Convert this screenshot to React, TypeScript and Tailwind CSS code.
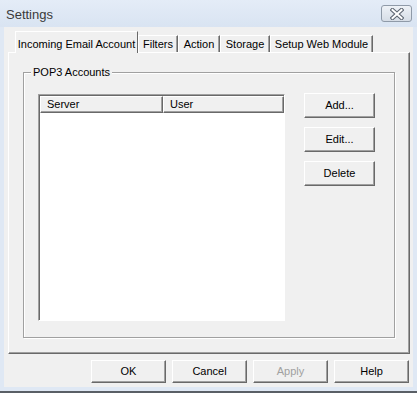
const raised =
  "border border-t-white border-l-white border-r-[#696969] border-b-[#696969] shadow-[inset_-1px_-1px_0_#a0a0a0]";

function Btn({ label, className = "", disabled = false }: { label: string; className?: string; disabled?: boolean }) {
  return (
    <div
      className={`flex items-center justify-center bg-[#f0f0f0] ${raised} ${disabled ? "text-[#a0a0a0]" : "text-black"} ${className}`}
    >
      {label}
    </div>
  );
}

function CloseGlyph() {
  // outlined white X, like the Win7 basic caption button
  return (
    <svg width="14" height="12" viewBox="0 0 14 12">
      <path d="M2.5 2 L11.5 10 M11.5 2 L2.5 10" stroke="#5d6672" strokeWidth="4.2" strokeLinecap="square" />
      <path d="M2.5 2 L11.5 10 M11.5 2 L2.5 10" stroke="#ffffff" strokeWidth="2" strokeLinecap="square" />
    </svg>
  );
}

const tabs = [
  { label: "Filters", w: "w-[40px]" },
  { label: "Action", w: "w-[42px]" },
  { label: "Storage", w: "w-[50px]" },
  { label: "Setup Web Module", w: "w-[103px]" },
];

export default function App() {
  return (
    <div className="w-[417px] h-[393px] flex flex-col bg-[#dfe8f4] border-b-2 border-b-[#5a5f66] font-['Liberation_Sans',Arial,sans-serif] text-[11px] text-black select-none whitespace-nowrap">
      {/* Title bar */}
      <div className="h-[27px] flex items-start bg-gradient-to-b from-[#e4ecf7] to-[#d9e4f2]">
        <span className="pl-[6px] pt-[5px] text-[13px] text-[#3a3a3a]">Settings</span>
        <div className="ml-auto mt-[5px] mr-[5px] w-[31px] h-[17px] rounded-[3px] border border-[#8f9aa8] bg-gradient-to-b from-[#eef2f7] to-[#d6dde6] flex items-center justify-center">
          <CloseGlyph />
        </div>
      </div>

      {/* Client area */}
      <div className="flex-1 mx-[4px] mb-[4px] bg-[#f0f0f0] flex flex-col">
        {/* Tabs */}
        <div className="mt-[4px] ml-[11px] h-[21px] flex items-end relative z-10">
          <div className="w-[123px] h-[22px] -mb-[1px] bg-[#f0f0f0] border-l border-t border-l-white border-t-white border-r border-r-[#696969] flex justify-center pt-[4px]">
            Incoming Email Account
          </div>
          {tabs.map((t) => (
            <div
              key={t.label}
              className={`${t.w} h-[17px] bg-[#f0f0f0] border-l border-t border-l-white border-t-white border-r border-r-[#696969] shadow-[inset_-1px_0_0_#a0a0a0] flex items-center justify-center`}
            >
              {t.label}
            </div>
          ))}
        </div>

        {/* Tab panel */}
        <div className="ml-[4px] w-[402px] h-[302px] border border-t-white border-l-white border-r-[#696969] border-b-[#696969] shadow-[inset_-1px_-1px_0_#a0a0a0]">
          <div className="relative mt-[19px] ml-[14px] w-[372px] h-[266px] border border-[#a0a0a0] shadow-[inset_1px_1px_0_white,1px_1px_0_white] flex items-start">
            <span className="absolute -top-[8px] left-[7px] px-[2px] bg-[#f0f0f0] leading-[14px]">POP3 Accounts</span>

            {/* List view */}
            <div className="mt-[21px] ml-[14px] w-[247px] h-[227px] bg-white border border-t-[#a0a0a0] border-l-[#a0a0a0] border-r-white border-b-white shadow-[inset_1px_1px_0_#696969] pl-[1px] pt-[1px] flex flex-col">
              <div className="h-[17px] flex">
                <div className={`w-[123px] h-full bg-[#f0f0f0] ${raised} flex items-center pl-[6px]`}>Server</div>
                <div className={`flex-1 h-full bg-[#f0f0f0] ${raised} flex items-center pl-[6px]`}>User</div>
              </div>
            </div>

            {/* Side buttons */}
            <div className="mt-[20px] ml-[19px] flex flex-col gap-[9px]">
              <Btn label="Add..." className="w-[71px] h-[25px]" />
              <Btn label="Edit..." className="w-[71px] h-[25px]" />
              <Btn label="Delete" className="w-[71px] h-[25px]" />
            </div>
          </div>
        </div>

        {/* Dialog buttons */}
        <div className="mt-[6px] mr-[4px] flex justify-end gap-[6px]">
          <Btn label="OK" className="w-[75px] h-[23px]" />
          <Btn label="Cancel" className="w-[75px] h-[23px]" />
          <Btn label="Apply" className="w-[75px] h-[23px]" disabled />
          <Btn label="Help" className="w-[75px] h-[23px]" />
        </div>
      </div>
    </div>
  );
}
